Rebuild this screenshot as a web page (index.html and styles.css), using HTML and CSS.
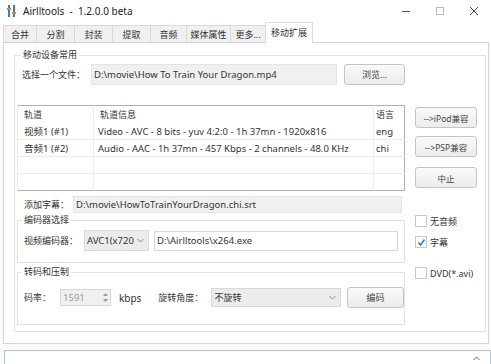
FILE: index.html
```html
<!DOCTYPE html>
<html lang="zh-CN">
<head>
    <meta charset="UTF-8">
    <title>Airlltools</title>
    <link rel="stylesheet" href="styles.css">
</head>
<body>
    <div class="titlebar">
        <svg class="app-icon" width="9" height="12" viewBox="0 0 9 12">
            <rect x="1" y="0" width="2" height="12" fill="#3a7bd5"/>
            <rect x="6" y="0" width="2" height="12" fill="#3a7bd5"/>
            <rect x="0" y="3" width="4" height="2" fill="#e08a2c"/>
            <rect x="5" y="7" width="4" height="2" fill="#e08a2c"/>
        </svg>
        <span class="title">Airlltools&nbsp; - &nbsp;1.2.0.0 beta</span>
        <div class="controls">
            <svg width="10" height="10" viewBox="0 0 10 10"><line x1="1" y1="5.5" x2="9" y2="5.5" stroke="#555" stroke-width="1"/></svg>
            <svg width="10" height="10" viewBox="0 0 10 10"><rect x="1.5" y="1.5" width="7" height="7" fill="none" stroke="#bbb" stroke-width="1"/></svg>
            <svg width="10" height="10" viewBox="0 0 10 10"><path d="M1 1 L9 9 M9 1 L1 9" stroke="#444" stroke-width="1"/></svg>
        </div>
    </div>

    <div class="tabs">
        <div class="tab t1">合并</div>
        <div class="tab t2">分割</div>
        <div class="tab t3">封装</div>
        <div class="tab t4">提取</div>
        <div class="tab t5">音频</div>
        <div class="tab t6">媒体属性</div>
        <div class="tab t7">更多...</div>
        <div class="tab active">移动扩展</div>
    </div>

    <div class="panel">
        <fieldset class="group outer">
            <legend>移动设备常用</legend>
            <div class="columns">
                <div class="left">
                    <div class="file-row">
                        <span class="label">选择一个文件：</span>
                        <div class="textbox readonly file-input">D:\movie\How To Train Your Dragon.mp4</div>
                        <div class="btn browse">浏览...</div>
                    </div>

                    <table class="listview">
                        <thead>
                            <tr><th class="c1">轨道</th><th class="c2">轨道信息</th><th class="c3">语言</th></tr>
                        </thead>
                        <tbody>
                            <tr><td>视频1 (#1)</td><td>Video - AVC - 8 bits - yuv 4:2:0 - 1h 37mn - 1920x816</td><td>eng</td></tr>
                            <tr><td>音频1 (#2)</td><td>Audio - AAC - 1h 37mn - 457 Kbps - 2 channels - 48.0 KHz</td><td>chi</td></tr>
                            <tr><td></td><td></td><td></td></tr>
                            <tr class="last"><td></td><td></td><td></td></tr>
                        </tbody>
                    </table>

                    <div class="sub-row">
                        <span class="label">添加字幕：</span>
                        <div class="textbox readonly sub-input">D:\movie\HowToTrainYourDragon.chi.srt</div>
                    </div>

                    <fieldset class="group enc">
                        <legend>编码器选择</legend>
                        <div class="enc-row">
                            <span class="label">视频编码器：</span>
                            <div class="combo enc-combo">
                                <span>AVC1(x720</span>
                                <svg width="7" height="5" viewBox="0 0 7 5"><path d="M0.5 1 L3.5 4 L6.5 1" fill="none" stroke="#888" stroke-width="1"/></svg>
                            </div>
                            <div class="textbox exe-input">D:\Airlltools\x264.exe</div>
                        </div>
                    </fieldset>

                    <fieldset class="group trans">
                        <legend>转码和压制</legend>
                        <div class="trans-row">
                            <span class="label">码率：</span>
                            <div class="spin">
                                <span>1591</span>
                                <div class="spin-arrows">
                                    <svg width="5" height="3" viewBox="0 0 5 3"><path d="M0 3 L2.5 0 L5 3Z" fill="#999"/></svg>
                                    <svg width="5" height="3" viewBox="0 0 5 3"><path d="M0 0 L2.5 3 L5 0Z" fill="#999"/></svg>
                                </div>
                            </div>
                            <span class="unit">kbps</span>
                            <span class="label rot-label">旋转角度：</span>
                            <div class="combo rot-combo">
                                <span>不旋转</span>
                                <svg width="7" height="5" viewBox="0 0 7 5"><path d="M0.5 1 L3.5 4 L6.5 1" fill="none" stroke="#888" stroke-width="1"/></svg>
                            </div>
                            <div class="btn encode">编码</div>
                        </div>
                    </fieldset>
                </div>

                <div class="right">
                    <div class="btn side ipod">--&gt;iPod兼容</div>
                    <div class="btn side psp">--&gt;PSP兼容</div>
                    <div class="btn side stop">中止</div>

                    <div class="check first"><span class="box"></span>无音频</div>
                    <div class="check"><span class="box"><svg width="9" height="9" viewBox="0 0 9 9"><path d="M1.5 4.5 L3.5 7 L7.5 1.5" fill="none" stroke="#2a7ad2" stroke-width="1.5"/></svg></span>字幕</div>
                    <div class="check dvd"><span class="box"></span>DVD(*.avi)</div>
                </div>
            </div>
        </fieldset>
    </div>

    <div class="log">
        <svg class="scroll-up" width="7" height="5" viewBox="0 0 7 5"><path d="M0.5 4 L3.5 1 L6.5 4" fill="none" stroke="#666" stroke-width="1"/></svg>
    </div>
</body>
</html>
```

FILE: styles.css
```css
body {
    margin: 0;
    width: 491px;
    height: 364px;
    overflow: hidden;
    background: #fbfbfb;
    font-family: "Noto Sans", "Noto Sans CJK SC", sans-serif;
    font-size: 9px;
    color: #333;
}
.titlebar {
    display: flex;
    align-items: center;
    height: 22px;
    background: #fff;
}
.app-icon {
    margin-left: 7px;
    margin-right: 7px;
}
.title {
    font-size: 10px;
    color: #222;
}
.controls {
    margin-left: auto;
    display: flex;
    gap: 24px;
    margin-right: 12px;
}
.tabs {
    display: flex;
    align-items: flex-end;
    height: 20px;
    padding-left: 3px;
    background: #fff;
}
.tab {
    height: 17px;
    line-height: 17px;
    text-align: center;
    background: #f0f0f0;
    border: 1px solid #d9d9d9;
    border-bottom: none;
    margin-right: -1px;
    box-sizing: border-box;
}
.t1 { width: 34px; }
.t2, .t3, .t4 { width: 39px; }
.t5 { width: 37px; }
.t6 { width: 45px; }
.t7 { width: 36px; }
.tab.active {
    width: 48px;
    height: 21px;
    line-height: 19px;
    background: #fff;
    position: relative;
    margin-bottom: -1px;
    z-index: 1;
}
.panel {
    margin-left: 3px;
    width: 486px;
    height: 302px;
    box-sizing: border-box;
    background: #fff;
    border: 1px solid #d4d4dc;
    padding: 6px 0 0 10px;
}
.group {
    margin: 0;
    border: 1px solid #e2e2e2;
    padding: 0;
    min-width: 0;
}
.group legend {
    padding: 0 2px;
    margin-left: 4px;
    line-height: 12px;
    font-size: 9px;
}
.outer {
    width: 472px;
    height: 283px;
    box-sizing: border-box;
    padding: 0 0 0 2px;
}
.columns {
    display: flex;
}
.left {
    width: 388px;
}
.right {
    width: 62px;
    margin-left: 10px;
    display: flex;
    flex-direction: column;
}
.label {
    white-space: nowrap;
}
.textbox, .combo, .spin {
    box-sizing: border-box;
    border: 1px solid #d6d6d6;
    background: #fff;
    display: flex;
    align-items: center;
    padding-left: 2px;
    white-space: nowrap;
    overflow: hidden;
}
.textbox {
    font-size: 9.5px;
}
.readonly {
    background: #f0f0f0;
    border-color: #e4e4e4;
}
.btn {
    box-sizing: border-box;
    border: 1px solid #c4c4c4;
    border-radius: 3px;
    background: linear-gradient(#fafafa, #ececec);
    display: flex;
    align-items: center;
    justify-content: center;
    color: #444;
}
.file-row {
    display: flex;
    align-items: center;
    margin-top: 3px;
    height: 21px;
    padding-left: 5px;
}
.file-input {
    width: 247px;
    height: 21px;
    margin-left: 6px;
}
.browse {
    width: 61px;
    height: 21px;
    margin-left: 7px;
}
.listview {
    margin-top: 20px;
    width: 388px;
    height: 84px;
    border: 1px solid #b0b0b0;
    border-collapse: collapse;
    table-layout: fixed;
}
.listview th {
    font-weight: normal;
    text-align: left;
    height: 17px;
    padding: 0 0 0 6px;
}
.listview td {
    height: 16px;
    padding: 0 0 0 6px;
    border-bottom: 1px solid #ececec;
    white-space: nowrap;
    overflow: hidden;
    font-size: 9.5px;
}
.listview tr.last td {
    border-bottom: none;
}
.listview th, .listview td {
    border-left: 1px solid #ececec;
}
.listview .c1 { width: 69px; }
.listview .c3 { width: 28px; padding-left: 2px; }
.listview td:nth-child(2) { padding-left: 4px; }
.listview td:nth-child(3) { padding-left: 2px; }
.sub-row {
    display: flex;
    align-items: center;
    margin-top: 5px;
    height: 17px;
    padding-left: 7px;
}
.sub-input {
    width: 329px;
    height: 17px;
    margin-left: 4px;
}
.enc {
    margin-top: 1px;
    width: 388px;
    height: 49px;
    box-sizing: border-box;
}
.enc-row {
    display: flex;
    align-items: center;
    margin-top: 4px;
    height: 21px;
    padding-left: 6px;
}
.combo {
    justify-content: space-between;
    padding-right: 4px;
    background: #ececec;
    border-color: #d9d9d9;
}
.enc-combo {
    width: 65px;
    height: 21px;
    margin-left: 6px;
    font-size: 9.5px;
}
.exe-input {
    width: 244px;
    height: 20px;
    margin-left: 5px;
}
.trans {
    margin-top: 3px;
    width: 388px;
    height: 59px;
    box-sizing: border-box;
}
.trans-row {
    display: flex;
    align-items: center;
    margin-top: 9px;
    height: 21px;
    padding-left: 6px;
}
.spin {
    width: 51px;
    height: 17px;
    margin-left: 9px;
    color: #999;
    background: #f0f0f0;
    justify-content: space-between;
    padding-right: 2px;
    font-size: 9.5px;
}
.spin-arrows {
    display: flex;
    flex-direction: column;
    gap: 3px;
}
.unit {
    margin-left: 8px;
    font-size: 10px;
}
.rot-label {
    margin-left: 17px;
}
.rot-combo {
    width: 130px;
    height: 19px;
    margin-left: 8px;
}
.encode {
    width: 57px;
    height: 21px;
    margin-left: 6px;
}
.side {
    height: 21px;
    font-size: 8.5px;
}
.ipod { margin-top: 46px; }
.psp { margin-top: 8px; }
.stop { margin-top: 10px; }
.check {
    display: flex;
    align-items: center;
    height: 12px;
    margin-top: 9px;
    white-space: nowrap;
}
.check.first { margin-top: 27px; }
.check.dvd { margin-top: 19px; }
.box {
    width: 10px;
    height: 10px;
    border: 1px solid #c8c8c8;
    background: #fff;
    margin-right: 3px;
    display: flex;
    align-items: center;
    justify-content: center;
}
.log {
    margin: 6px 0 0 4px;
    height: 20px;
    border: 1px solid #a9c4d6;
    background: #fff;
    display: flex;
    justify-content: flex-end;
    padding: 5px 10px 0 0;
    box-sizing: border-box;
}
```
